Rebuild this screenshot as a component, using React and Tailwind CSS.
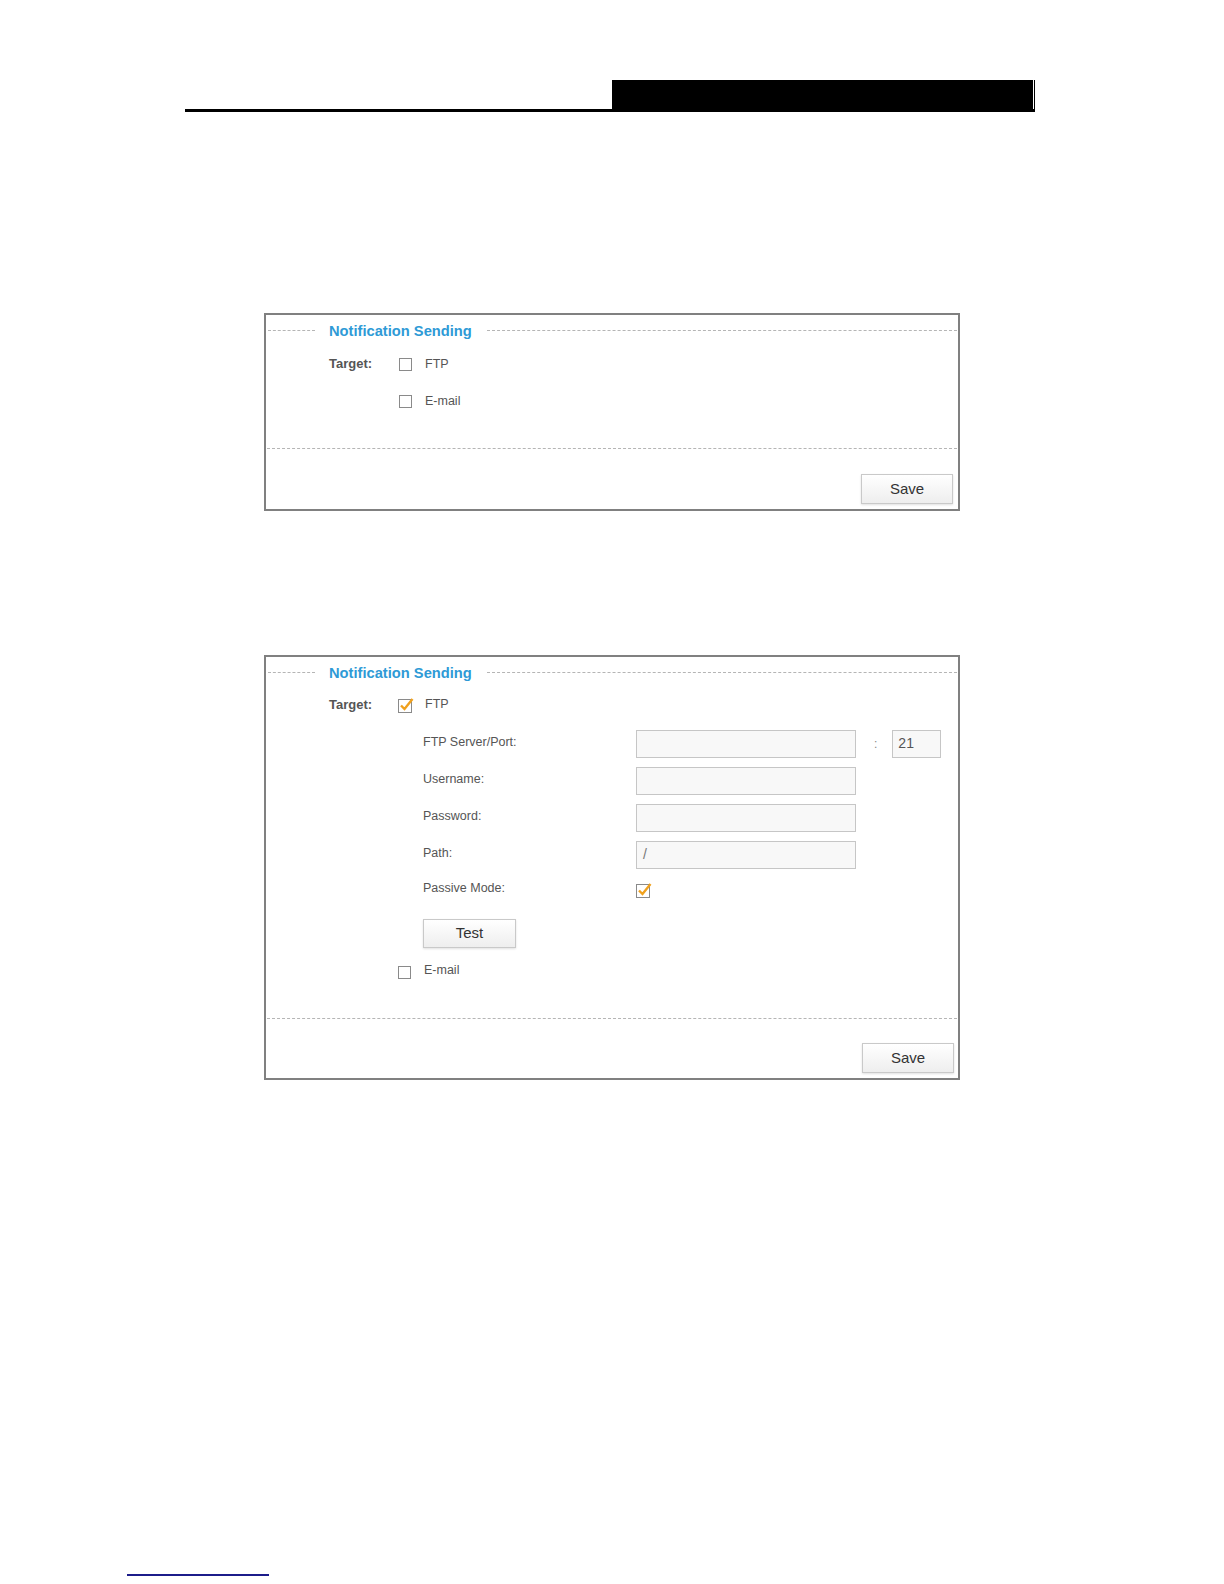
import React from 'react'

const font = { fontFamily: '"Liberation Sans", Arial, sans-serif' }

function Box({ checked }) {
  if (!checked) {
    return <span className="block w-[13px] h-[13px] border border-[#8a8a8a] bg-white shrink-0" />
  }
  return (
    <svg width="16" height="16" viewBox="0 0 16 16" className="shrink-0 block">
      <rect x="0.5" y="2.5" width="13" height="13" fill="#fff" stroke="#8a8a8a" />
      <path d="M3 8.5 L6.5 12 L14.5 2" fill="none" stroke="#f0a11e" strokeWidth="2.4" />
    </svg>
  )
}

function Btn({ children }) {
  return (
    <button className="w-[92px] h-[30px] border border-[#c9c9c9] bg-gradient-to-b from-white to-[#eeeeee] text-[15px] text-[#333] shadow-[0_1px_2px_rgba(0,0,0,0.12)]">
      {children}
    </button>
  )
}

function Title() {
  return (
    <div className="h-[30px] flex items-center">
      <div className="ml-[2px] w-[47px] border-t border-dashed border-[#b5b5b5]" />
      <span className="ml-[14px] mt-[2px] text-[14.7px] font-bold text-[#2e9ad6]">Notification Sending</span>
      <div className="ml-[15px] mr-[1px] flex-1 border-t border-dashed border-[#b5b5b5]" />
    </div>
  )
}

function Field({ label, value }) {
  return (
    <div className="h-[37px] flex items-center">
      <span className="w-[213px] text-[12.5px] text-[#555] -mt-[2px]">{label}</span>
      <div className="w-[220px] h-[28px] border border-[#c6c6c6] bg-[#f8f8f8] flex items-center px-[6px] text-[14px] text-[#777]">
        {value}
      </div>
    </div>
  )
}

export default function App() {
  return (
    <div className="w-[1224px] h-[1584px] bg-white" style={font}>
      {/* page header */}
      <div className="pt-[80px] pl-[185px]">
        <div className="w-[850px]">
          <div className="flex h-[29px]">
            <div className="w-[427px]" />
            <div className="w-[421px] bg-black" />
            <div className="w-[1px]" />
            <div className="w-[1px] bg-black" />
          </div>
          <div className="h-[3px] bg-black" />
        </div>
      </div>

      {/* panel 1 */}
      <div className="mt-[201px] ml-[264px] w-[696px] border-2 border-[#808080]">
        <Title />
        <div className="pl-[63px]">
          <div className="h-[38px] flex items-center">
            <span className="w-[70px] text-[13px] font-bold text-[#555]">Target:</span>
            <Box />
            <span className="ml-[13px] text-[12.5px] text-[#555]">FTP</span>
          </div>
          <div className="h-[36px] flex items-center pl-[70px]">
            <Box />
            <span className="ml-[13px] text-[12.5px] text-[#555]">E-mail</span>
          </div>
        </div>
        <div className="mt-[29px] mx-[1px] border-t border-dashed border-[#b5b5b5]" />
        <div className="mt-[25px] pr-[5px] pb-[5px] flex justify-end">
          <Btn>Save</Btn>
        </div>
      </div>

      {/* panel 2 */}
      <div className="mt-[144px] ml-[264px] w-[696px] border-2 border-[#808080]">
        <Title />
        <div className="pl-[63px]">
          <div className="h-[36px] flex items-center">
            <span className="w-[69px] text-[13px] font-bold text-[#555]">Target:</span>
            <Box checked />
            <span className="ml-[11px] text-[12.5px] text-[#555] -mt-[1px]">FTP</span>
          </div>
          <div className="mt-[2px] pl-[94px]">
            <div className="flex items-center">
              <Field label="FTP Server/Port:" value="" />
              <span className="ml-[18px] text-[12px] text-[#888]">:</span>
              <div className="ml-[15px] w-[49px] h-[28px] border border-[#c6c6c6] bg-[#f8f8f8] flex items-center px-[5px] text-[14px] text-[#555]">
                21
              </div>
            </div>
            <Field label="Username:" value="" />
            <Field label="Password:" value="" />
            <Field label="Path:" value="/" />
            <div className="h-[33px] flex items-center">
              <span className="w-[213px] text-[12.5px] text-[#555] -mt-[2px]">Passive Mode:</span>
              <Box checked />
            </div>
            <div className="mt-[13px]">
              <button className="w-[93px] h-[29px] border border-[#c9c9c9] bg-gradient-to-b from-white to-[#eeeeee] text-[15px] text-[#333] shadow-[0_1px_2px_rgba(0,0,0,0.12)]">
                Test
              </button>
            </div>
          </div>
          <div className="mt-[10px] h-[28px] flex items-center pl-[69px]">
            <Box />
            <span className="ml-[13px] text-[12.5px] text-[#555] -mt-[3px]">E-mail</span>
          </div>
        </div>
        <div className="mt-[32px] mx-[1px] border-t border-dashed border-[#b5b5b5]" />
        <div className="mt-[24px] pr-[4px] pb-[5px] flex justify-end">
          <Btn>Save</Btn>
        </div>
      </div>

      {/* footer link line */}
      <div className="mt-[494px] ml-[127px] w-[142px] h-[2px] bg-[#1c1c8a]" />
    </div>
  )
}
